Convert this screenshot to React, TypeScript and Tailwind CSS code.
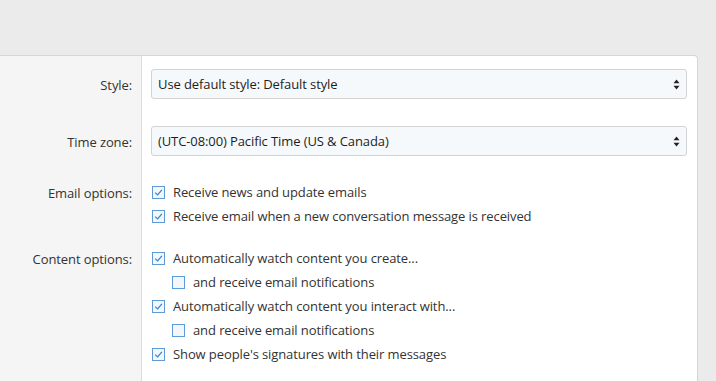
import React from 'react';

const font = { fontFamily: '"Open Sans", "Noto Sans", sans-serif', letterSpacing: '-0.1px' };

function SelectBox({ value }: { value: string }) {
  return (
    <div className="flex h-[30px] items-center justify-between rounded-[3px] border border-[#d3d3d3] bg-[#f6f9fc] pl-[6px] pr-[6px] text-[13px] text-[#1d1d1d]">
      <span className="pt-[2px]">{value}</span>
      <svg width="7" height="11" viewBox="0 0 7 11" className="text-[#222]">
        <path d="M3.5 0.5 L6.5 4.3 L0.5 4.3 Z" fill="currentColor" />
        <path d="M3.5 10.5 L6.5 6.7 L0.5 6.7 Z" fill="currentColor" />
      </svg>
    </div>
  );
}

function Check({ checked }: { checked: boolean }) {
  return (
    <span className="flex h-[13px] w-[13px] shrink-0 items-center justify-center border border-[#5e9ad6] bg-[#f2f7fd]">
      {checked && (
        <svg width="9" height="9" viewBox="0 0 9 9">
          <path d="M1.2 4.6 L3.6 6.9 L7.9 1.9" fill="none" stroke="#3b82cc" strokeWidth="1.3" />
        </svg>
      )}
    </span>
  );
}

function CheckRow({ label, checked, nested }: { label: string; checked: boolean; nested?: boolean }) {
  return (
    <div className={`flex h-[24px] items-center gap-[8px] ${nested ? 'pl-[21px]' : 'pl-px'}`}>
      <Check checked={checked} />
      <span className="pt-px">{label}</span>
    </div>
  );
}

function Row({
  label,
  children,
  pt,
  pb,
  lh,
}: {
  label: string;
  children: React.ReactNode;
  pt: string;
  pb: string;
  lh: string;
}) {
  return (
    <div className="flex">
      <div className={`w-[142px] shrink-0 border-r border-[#dcdcdc] bg-[#f5f5f5] pr-[9px] text-right ${pt} ${pb}`}>
        <div className={lh}>{label}</div>
      </div>
      <div className={`flex-1 pl-[9px] pr-[10px] ${pt} ${pb}`}>{children}</div>
    </div>
  );
}

export default function App() {
  return (
    <div className="h-[381px] w-[716px] overflow-hidden bg-[#ebebeb] pt-[55px] pr-[18px] text-[13px] text-[#333333]" style={font}>
      <div className="h-full rounded-tr-[4px] border-t border-r border-[#d6d6d6] bg-white">
        <Row label="Style:" pt="pt-[13px]" pb="pb-[14px]" lh="h-[30px] leading-[32px]">
          <SelectBox value="Use default style: Default style" />
        </Row>
        <Row label="Time zone:" pt="pt-[13px]" pb="pb-[14px]" lh="h-[30px] leading-[32px]">
          <SelectBox value="(UTC-08:00) Pacific Time (US & Canada)" />
        </Row>
        <Row label="Email options:" pt="pt-[10px]" pb="pb-[8px]" lh="pt-px leading-[24px]">
          <CheckRow checked label="Receive news and update emails" />
          <CheckRow checked label="Receive email when a new conversation message is received" />
        </Row>
        <Row label="Content options:" pt="pt-[10px]" pb="pb-[30px]" lh="pt-px leading-[24px]">
          <CheckRow checked label="Automatically watch content you create..." />
          <CheckRow nested checked={false} label="and receive email notifications" />
          <CheckRow checked label="Automatically watch content you interact with..." />
          <CheckRow nested checked={false} label="and receive email notifications" />
          <CheckRow checked label="Show people's signatures with their messages" />
        </Row>
      </div>
    </div>
  );
}
